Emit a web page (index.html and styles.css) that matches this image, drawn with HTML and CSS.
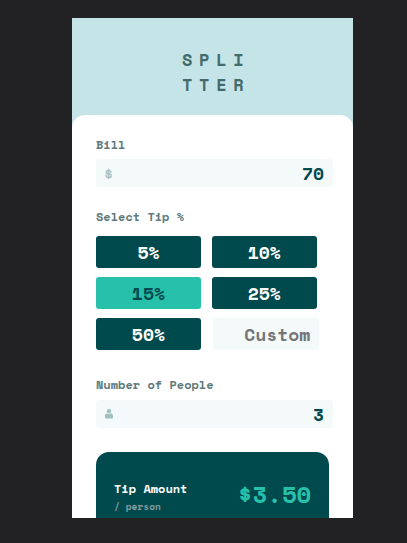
FILE: index.html
```html
<!DOCTYPE html>
<html lang="en">
<head>
<meta charset="utf-8">
<title>Splitter</title>
<link rel="stylesheet" href="styles.css">
</head>
<body>
<main class="app">
  <h1 class="logo">SPLI<br>TTER</h1>
  <section class="card">
    <div class="label">Bill</div>
    <div class="field"><span class="dollar">$</span><span class="value">70</span></div>
    <div class="label label-tip">Select Tip %</div>
    <div class="tips">
      <button class="tip">5%</button>
      <button class="tip">10%</button>
      <button class="tip active">15%</button>
      <button class="tip">25%</button>
      <button class="tip">50%</button>
      <div class="custom">Custom</div>
    </div>
    <div class="label label-people">Number of People</div>
    <div class="field">
      <svg class="person" viewBox="0 0 8 10"><ellipse cx="4" cy="2.300" rx="2.100" ry="2.300"/><path d="M1.900 4.300C2.900 5.500 5.100 5.500 6.100 4.300C7.400 4.700 8 5.800 8 7.200V8.400Q8 9.400 7 9.400H1Q0 9.400 0 8.400V7.200C0 5.800 .6 4.700 1.900 4.300Z"/></svg>
      <span class="value">3</span>
    </div>
    <div class="result">
      <div>
        <div class="result-title">Tip Amount</div>
        <div class="result-sub">/ person</div>
      </div>
      <div class="amount">$3.50</div>
    </div>
  </section>
</main>
</body>
</html>
```
FILE: styles.css
```css
* { box-sizing: border-box; }
body {
  margin: 0;
  height: 543px;
  padding: 18px 54px 25px 72px;
  background: #222224;
  overflow: hidden;
  font-family: "Space Mono", "Liberation Mono", monospace;
  font-weight: 700;
}
.app {
  width: 281px;
  height: 500px;
  overflow: hidden;
  background: #c5e4e7;
}
.logo {
  margin: 0;
  height: 97.400px;
  padding: 29.400px 0 0 110px;
  color: #426b6c;
  font-size: 17px;
  line-height: 25px;
  letter-spacing: 6.700px;
}
.card {
  height: 460px;
  padding: 20.600px 20px 0 24px;
  border-radius: 13px 13px 0 0;
  background: #fff;
}
.label {
  height: 23px;
  color: #5e7a7d;
  font-size: 12px;
  line-height: 18px;
}
.label-tip { margin-top: 21px; height: 27.500px; }
.label-people { margin-top: 25.500px; height: 24px; }
.field {
  display: flex;
  align-items: center;
  justify-content: space-between;
  height: 28px;
  padding: 0 9px;
  border-radius: 3px;
  background: #f4fafa;
}
.dollar {
  margin-left: -1px;
  color: #9fbfc0;
  font-size: 15px;
  font-weight: 400;
  line-height: 28px;
  -webkit-text-stroke: 0.2px #9fbfc0;
}
.person { width: 8px; height: 10px; fill: #9fbfc0; }
.value { color: #00494d; font-size: 18px; line-height: 28px; }
.tips {
  display: grid;
  grid-template-columns: 104.800px 107px;
  column-gap: 11px;
  row-gap: 9.200px;
  margin-top: 0.500px;
}
.tip {
  width: 104.800px;
  height: 32px;
  padding: 0;
  border: 0;
  border-radius: 3px;
  background: #00494d;
  color: #fff;
  font: inherit;
  font-size: 18px;
  line-height: 30px;
}
.tip.active { background: #26c0ab; color: #00494d; }
.custom {
  margin-left: 1px;
  padding: 0 8.500px 0 0;
  height: 32px;
  border-radius: 3px;
  background: #f4fafa;
  color: #757575;
  font-size: 18px;
  line-height: 32px;
  text-align: right;
}
.result {
  display: flex;
  justify-content: space-between;
  width: 233.300px;
  height: 120px;
  margin-top: 24px;
  padding: 28px 18px 0 18px;
  border-radius: 13px;
  background: #00494d;
}
.result-title { color: #fff; font-size: 12px; line-height: 18px; }
.result-sub { color: #7f9c9f; font-size: 9.600px; line-height: 17px; }
.amount { color: #26c0ab; font-size: 24px; line-height: 29px; }
```
